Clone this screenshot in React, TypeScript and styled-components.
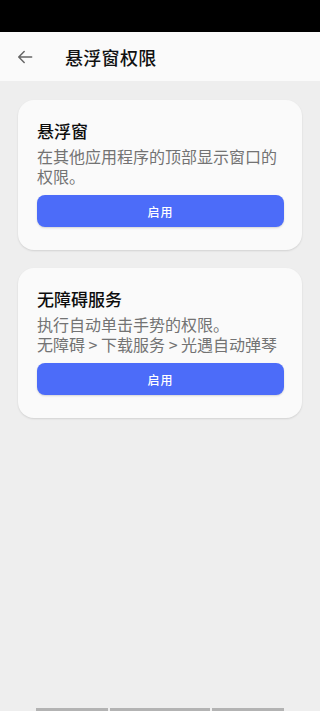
import React from 'react';
import styled, { createGlobalStyle } from 'styled-components';

const GlobalStyle = createGlobalStyle`
    html, body {
        margin: 0;
        padding: 0;
        background: #eeeeee;
    }
    body {
        font-family: 'Noto Sans CJK SC', 'Noto Sans', Roboto, sans-serif;
    }
    * {
        box-sizing: border-box;
    }
`;

type Permission = {
    title: string;
    lines: string[];
};

const permissions: Permission[] = [
    {
        title: '悬浮窗',
        lines: ['在其他应用程序的顶部显示窗口的权限。'],
    },
    {
        title: '无障碍服务',
        lines: ['执行自动单击手势的权限。', '无障碍 > 下载服务 > 光遇自动弹琴'],
    },
];

function BackIcon() {
    return (
        <svg width="20" height="20" viewBox="0 0 24 24" fill="none">
            <path
                d="M20 12H4.8M11 5.5L4.5 12l6.5 6.5"
                stroke="#666"
                strokeWidth="1.8"
                strokeLinecap="round"
                strokeLinejoin="round"
            />
        </svg>
    );
}

export default function App() {
    return (
        <>
            <GlobalStyle />
            <Screen>
                <StatusBar />
                <AppBar>
                    <BackButton aria-label="返回">
                        <BackIcon />
                    </BackButton>
                    <PageTitle>悬浮窗权限</PageTitle>
                </AppBar>

                <Content>
                    {permissions.map((item) => (
                        <Card key={item.title}>
                            <CardTitle>{item.title}</CardTitle>
                            <CardDescription>
                                {item.lines.map((line) => (
                                    <span key={line}>{line}</span>
                                ))}
                            </CardDescription>
                            <EnableButton>启用</EnableButton>
                        </Card>
                    ))}
                </Content>

                <BottomHint>
                    <HintBar $width={72} />
                    <HintBar $width={100} />
                    <HintBar $width={72} />
                </BottomHint>
            </Screen>
        </>
    );
}

const Screen = styled.div`
    display: flex;
    flex-direction: column;
    min-height: 100vh;
    background: #eeeeee;
`;

const StatusBar = styled.div`
    height: 32px;
    background: #000;
`;

const AppBar = styled.header`
    display: flex;
    align-items: center;
    height: 49px;
    background: #fafafa;
    padding-left: 15px;
`;

const BackButton = styled.button`
    display: flex;
    align-items: center;
    justify-content: center;
    width: 20px;
    height: 20px;
    padding: 0;
    border: none;
    background: none;
    margin-right: 30px;
`;

const PageTitle = styled.h1`
    margin: 0;
    font-size: 18px;
    font-weight: 500;
    color: #111;
    letter-spacing: 0.3px;
`;

const Content = styled.main`
    flex: 1;
    display: flex;
    flex-direction: column;
    gap: 18px;
    padding: 19px 18px;
`;

const Card = styled.section`
    display: flex;
    flex-direction: column;
    padding: 19px 18px 23px 19px;
    background: #fafafa;
    border-radius: 16px;
    box-shadow: 0 1px 2px rgba(0, 0, 0, 0.12);
`;

const CardTitle = styled.h2`
    margin: 0;
    font-size: 17px;
    line-height: 24px;
    font-weight: 500;
    color: #0d0d0d;
`;

const CardDescription = styled.p`
    display: flex;
    flex-direction: column;
    margin: 3px 0 0;
    font-size: 16px;
    line-height: 20px;
    color: #737373;
`;

const EnableButton = styled.button`
    height: 32px;
    margin-top: 9px;
    border: none;
    border-radius: 8px;
    background: #4c6cf9;
    color: #fff;
    font-family: inherit;
    font-size: 12px;
    font-weight: 500;
    letter-spacing: 1px;
    box-shadow: 0 1px 2px rgba(0, 0, 0, 0.15);
`;

const BottomHint = styled.footer`
    display: flex;
    justify-content: center;
    gap: 2px;
    height: 3px;
    padding: 0 36px;
`;

const HintBar = styled.div<{ $width: number }>`
    width: ${(props) => props.$width}px;
    background: #b3b3b3;
`;
